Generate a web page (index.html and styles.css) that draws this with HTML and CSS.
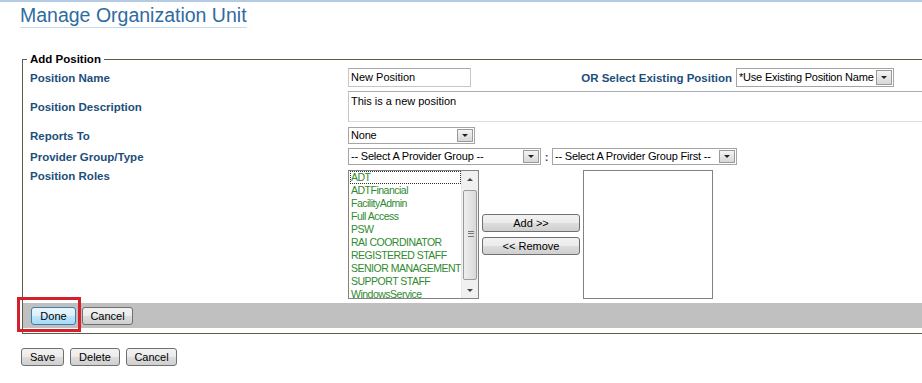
FILE: index.html
```html
<!DOCTYPE html>
<html>

    <head>
        <meta charset="utf-8">
        <title>Manage Organization Unit</title>
        <link rel="stylesheet" href="styles.css">
    </head>

    <body>
        <div class="top_line"></div>
        <div class="page_title"><h1>Manage Organization Unit</h1></div>

        <fieldset class="add_box">
            <legend>Add Position</legend>

            <div class="form_row row_name">
                <label class="form_label">Position Name</label>
                <div class="form_field">
                    <div class="text_input name_input">New Position</div>
                    <span class="or_label">OR Select Existing Position</span>
                    <div class="select_box existing_sel"><span class="sel_text">*Use Existing Position Name</span><span class="sel_arrow"></span></div>
                </div>
            </div>

            <div class="form_row row_desc">
                <label class="form_label">Position Description</label>
                <div class="form_field">
                    <div class="text_area">This is a new position</div>
                </div>
            </div>

            <div class="form_row row_small">
                <label class="form_label">Reports To</label>
                <div class="form_field">
                    <div class="select_box reports_sel"><span class="sel_text">None</span><span class="sel_arrow"></span></div>
                </div>
            </div>

            <div class="form_row row_small">
                <label class="form_label">Provider Group/Type</label>
                <div class="form_field">
                    <div class="select_box group_sel"><span class="sel_text">-- Select A Provider Group --</span><span class="sel_arrow"></span></div>
                    <span class="colon">:</span>
                    <div class="select_box type_sel"><span class="sel_text">-- Select A Provider Group First --</span><span class="sel_arrow"></span></div>
                </div>
            </div>

            <div class="form_row row_roles">
                <label class="form_label roles_label">Position Roles</label>
                <div class="form_field roles_field">
                    <div class="list_box">
                        <ul class="list_items">
                            <li class="focused">ADT</li>
                            <li>ADTFinancial</li>
                            <li>FacilityAdmin</li>
                            <li>Full Access</li>
                            <li>PSW</li>
                            <li>RAI COORDINATOR</li>
                            <li>REGISTERED STAFF</li>
                            <li>SENIOR MANAGEMENT</li>
                            <li>SUPPORT STAFF</li>
                            <li>WindowsService</li>
                        </ul>
                        <div class="scroll_bar">
                            <span class="scroll_up"></span>
                            <div class="scroll_track"><div class="scroll_thumb"><span class="grip"></span></div></div>
                            <span class="scroll_down"></span>
                        </div>
                    </div>
                    <div class="move_btns">
                        <button class="btn move_btn">Add &gt;&gt;</button>
                        <button class="btn move_btn">&lt;&lt; Remove</button>
                    </div>
                    <div class="list_box selected_box"></div>
                </div>
            </div>

            <div class="action_bar">
                <div class="done_mark">
                    <button class="btn done_btn">Done</button>
                </div>
                <button class="btn cancel_btn">Cancel</button>
            </div>
        </fieldset>

        <div class="page_btns">
            <button class="btn save_btn">Save</button>
            <button class="btn delete_btn">Delete</button>
            <button class="btn cancel_btn">Cancel</button>
        </div>
    </body>

</html>
```

FILE: styles.css
```css
* {
    margin: 0;
    padding: 0;
    box-sizing: border-box;
}

body {
    width: 922px;
    height: 383px;
    overflow: hidden;
    background: #fff;
    font-family: "Liberation Sans", Arial, sans-serif;
    font-size: 11px;
    color: #000;
}

.top_line {
    height: 2px;
    background: #b4cbe3;
}

.page_title {
    padding-left: 20px;
    padding-top: 2px;
}

.page_title h1 {
    display: inline-block;
    font-size: 19.5px;
    font-weight: normal;
    color: #2f6b9f;
    line-height: 22px;
    padding-bottom: 1px;
    border-bottom: 1px solid #c6dbee;
}

.add_box {
    margin: 25px -20px 0 22px;
    border: 1px solid #5e5d47;
    padding: 0 0 5px 0;
}

.add_box legend {
    margin-left: 4px;
    padding: 0 3px 0 3px;
    font-weight: bold;
    font-size: 11.5px;
    line-height: 13px;
}

.form_row {
    display: flex;
    align-items: center;
    padding-left: 7px;
}

.row_name {
    height: 19px;
    margin-top: 2px;
}

.row_desc {
    height: 31px;
    margin-top: 4px;
}

.row_small {
    height: 17px;
    margin-top: 5px;
}

.row_small + .row_small {
    margin-top: 4px;
}

.row_roles {
    height: 129px;
    margin-top: 5px;
    align-items: flex-start;
}

.form_label {
    width: 318px;
    flex-shrink: 0;
    font-weight: bold;
    font-size: 11.5px;
    color: #1d4e7b;
}

.roles_label {
    line-height: 13px;
}

.form_field {
    display: flex;
    align-items: center;
    flex: 1;
    height: 100%;
}

.text_input {
    height: 19px;
    border: 1px solid #c6c6c6;
    border-top-color: #a9a9a9;
    padding: 2px 0 0 2px;
    line-height: 13px;
}

.name_input {
    width: 123px;
}

.or_label {
    width: 261px;
    text-align: right;
    font-weight: bold;
    font-size: 11.5px;
    color: #1d4e7b;
    margin-right: 4px;
}

.text_area {
    width: 100%;
    height: 31px;
    border: 1px solid #dcdcdc;
    border-top-color: #acacac;
    border-left-color: #c6c6c6;
    padding: 3px 0 0 2px;
    line-height: 13px;
    align-self: flex-start;
}

.select_box {
    display: flex;
    align-items: center;
    height: 17px;
    border: 1px solid #a5a5a5;
    background: #fff;
    padding: 0 1px 0 2px;
}

.sel_text {
    flex: 1;
    white-space: nowrap;
    overflow: hidden;
    line-height: 13px;
    letter-spacing: -0.2px;
}

.sel_arrow {
    position: relative;
    flex-shrink: 0;
    width: 16px;
    height: 13px;
    border: 1px solid #9a9a9a;
    background: linear-gradient(#f4f4f4, #d8d8d8);
}

.sel_arrow::after {
    content: "";
    position: absolute;
    left: 4px;
    top: 4px;
    border-left: 3px solid transparent;
    border-right: 3px solid transparent;
    border-top: 3px solid #222;
}

.existing_sel {
    width: 158px;
    height: 19px;
}

.existing_sel .sel_arrow {
    height: 15px;
}

.existing_sel .sel_arrow::after {
    top: 5px;
}

.reports_sel {
    width: 127px;
}

.group_sel {
    width: 193px;
}

.colon {
    width: 11px;
    text-align: center;
    font-weight: bold;
    color: #1d4e7b;
}

.type_sel {
    width: 185px;
}

.roles_field {
    align-items: flex-start;
}

.list_box {
    position: relative;
    display: flex;
    width: 131px;
    height: 129px;
    border: 1px solid #828282;
    background: #fff;
    overflow: hidden;
}

.list_items {
    list-style: none;
    flex: 1;
    min-width: 0;
    overflow: hidden;
    padding-left: 1px;
}

.list_items li {
    height: 13px;
    line-height: 13px;
    padding-left: 1px;
    font-size: 10.5px;
    color: #2f8a2f;
    letter-spacing: -0.5px;
    white-space: nowrap;
}

.list_items li.focused {
    outline: 1px dotted #333;
    outline-offset: -1px;
}

.scroll_bar {
    display: flex;
    flex-direction: column;
    flex-shrink: 0;
    width: 17px;
    background: #f0f0f0;
    border-left: 1px solid #e8e8e8;
}

.scroll_up,
.scroll_down {
    position: relative;
    height: 17px;
}

.scroll_up::after,
.scroll_down::after {
    content: "";
    position: absolute;
    left: 5px;
    border-left: 3px solid transparent;
    border-right: 3px solid transparent;
}

.scroll_up::after {
    top: 7px;
    border-bottom: 3px solid #444;
}

.scroll_down::after {
    top: 7px;
    border-top: 3px solid #444;
}

.scroll_track {
    flex: 1;
    padding: 2px 0;
}

.scroll_thumb {
    position: relative;
    height: 90px;
    margin: 0 1px;
    border: 1px solid #9b9b9b;
    border-radius: 2px;
    background: linear-gradient(to right, #eeeeee, #d9d9d9);
}

.grip {
    position: absolute;
    left: 4px;
    top: 40px;
    width: 6px;
    height: 6px;
    border-top: 1px solid #777;
    border-bottom: 1px solid #777;
}

.grip::after {
    content: "";
    position: absolute;
    left: 0;
    top: 1px;
    width: 6px;
    height: 1px;
    background: #777;
}

.move_btns {
    display: flex;
    flex-direction: column;
    gap: 5px;
    margin: 44px 3px 0 3px;
}

.btn {
    font-family: "Liberation Sans", Arial, sans-serif;
    font-size: 11px;
    height: 18px;
    padding: 0;
    border: 1px solid #707070;
    border-radius: 3px;
    background: linear-gradient(#f2f2f2 0%, #ebebeb 50%, #dddddd 51%, #cfcfcf 100%);
    color: #000;
    line-height: 16px;
}

.move_btn {
    width: 98px;
}

.selected_box {
    width: 130px;
}

.action_bar {
    display: flex;
    align-items: center;
    height: 25px;
    margin-top: 4px;
    background: #c0c0c0;
}

.done_mark {
    position: relative;
    display: flex;
    margin-left: 8px;
    margin-right: 6px;
}

.done_mark::before {
    content: "";
    position: absolute;
    left: -14px;
    top: -10px;
    width: 58px;
    height: 29px;
    border: 3px solid #d3202a;
}

.done_btn {
    width: 45px;
    border-color: #3c7fb1;
    background: linear-gradient(#eaf6fd 0%, #d9f0fc 50%, #bee6fd 51%, #a7d9f5 100%);
}

.cancel_btn {
    width: 51px;
}

.page_btns {
    display: flex;
    gap: 6px;
    margin: 14px 0 0 21px;
}

.save_btn {
    width: 43px;
}

.delete_btn {
    width: 50px;
}
```
